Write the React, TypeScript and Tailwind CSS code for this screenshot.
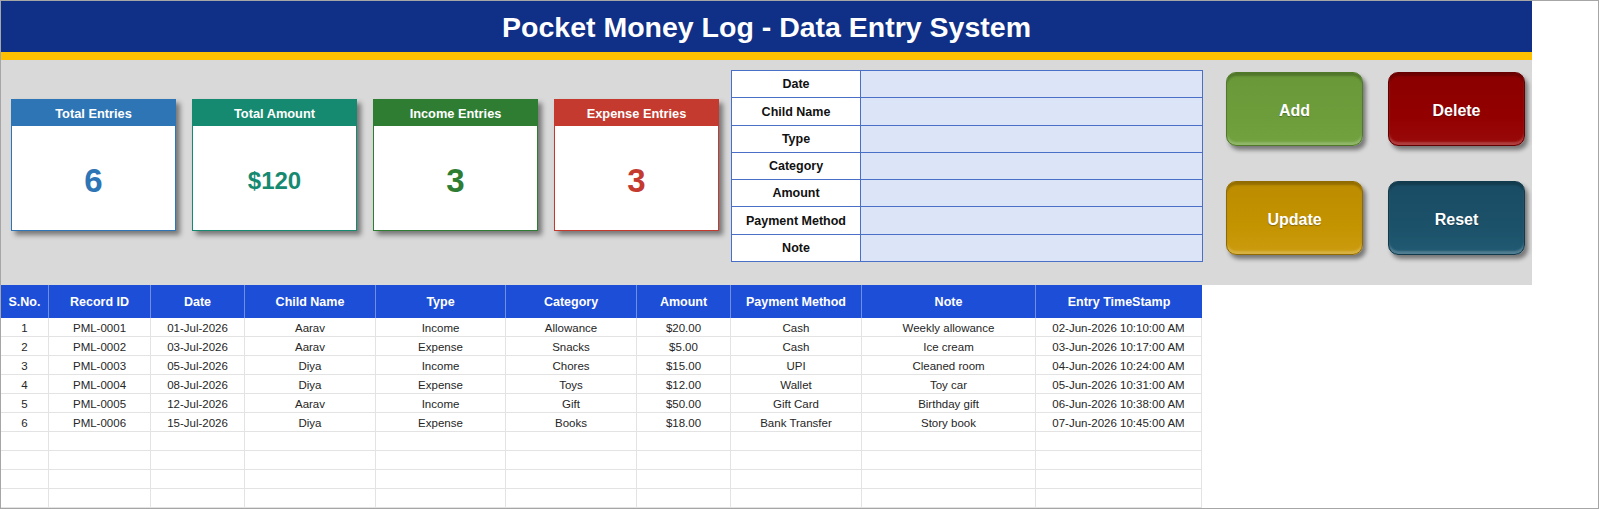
const cards = [
  {
    title: "Total Entries",
    value: "6",
    box: "border-[#2e75b6]",
    head: "bg-[#2e75b6]",
    text: "text-[#2e75b6] text-[33px]",
  },
  {
    title: "Total Amount",
    value: "$120",
    box: "border-[#168a70]",
    head: "bg-[#168a70]",
    text: "text-[#168a70] text-[24px]",
  },
  {
    title: "Income Entries",
    value: "3",
    box: "border-[#2e7d32]",
    head: "bg-[#2e7d32]",
    text: "text-[#2e7d32] text-[33px]",
  },
  {
    title: "Expense Entries",
    value: "3",
    box: "border-[#c43a2e]",
    head: "bg-[#c43a2e]",
    text: "text-[#c43a2e] text-[33px]",
  },
];

const formFields = ["Date", "Child Name", "Type", "Category", "Amount", "Payment Method", "Note"];

const buttons = [
  {
    label: "Add",
    cls: "bg-[linear-gradient(180deg,#689838_0%,#6d9d3b_60%,#72a240_100%)] border-[#4f7a28]",
  },
  {
    label: "Delete",
    cls: "bg-[linear-gradient(180deg,#8a0000_0%,#930000_60%,#9a0a0a_100%)] border-[#650000]",
  },
  {
    label: "Update",
    cls: "bg-[linear-gradient(180deg,#bd8c00_0%,#c49300_60%,#cc9c10_100%)] border-[#8f6a00]",
  },
  {
    label: "Reset",
    cls: "bg-[linear-gradient(180deg,#194c64_0%,#1b5169_60%,#215a73_100%)] border-[#123a4d]",
  },
];

const columns = [
  "S.No.",
  "Record ID",
  "Date",
  "Child Name",
  "Type",
  "Category",
  "Amount",
  "Payment Method",
  "Note",
  "Entry TimeStamp",
];

const rows = [
  ["1", "PML-0001", "01-Jul-2026", "Aarav", "Income", "Allowance", "$20.00", "Cash", "Weekly allowance", "02-Jun-2026 10:10:00 AM"],
  ["2", "PML-0002", "03-Jul-2026", "Aarav", "Expense", "Snacks", "$5.00", "Cash", "Ice cream", "03-Jun-2026 10:17:00 AM"],
  ["3", "PML-0003", "05-Jul-2026", "Diya", "Income", "Chores", "$15.00", "UPI", "Cleaned room", "04-Jun-2026 10:24:00 AM"],
  ["4", "PML-0004", "08-Jul-2026", "Diya", "Expense", "Toys", "$12.00", "Wallet", "Toy car", "05-Jun-2026 10:31:00 AM"],
  ["5", "PML-0005", "12-Jul-2026", "Aarav", "Income", "Gift", "$50.00", "Gift Card", "Birthday gift", "06-Jun-2026 10:38:00 AM"],
  ["6", "PML-0006", "15-Jul-2026", "Diya", "Expense", "Books", "$18.00", "Bank Transfer", "Story book", "07-Jun-2026 10:45:00 AM"],
  ["", "", "", "", "", "", "", "", "", ""],
  ["", "", "", "", "", "", "", "", "", ""],
  ["", "", "", "", "", "", "", "", "", ""],
  ["", "", "", "", "", "", "", "", "", ""],
];

const gridCols =
  "grid grid-cols-[48px_102px_94px_131px_130px_131px_94px_131px_174px_166px]";

export default function App() {
  return (
    <div className="h-[509px] w-[1600px] bg-white font-['Liberation_Sans',Arial,sans-serif]">
      <div className="h-[509px] w-[1599px] overflow-hidden border border-[#a6a6a6] bg-white">
        {/* title bar */}
        <div className="flex h-[51px] w-[1531px] items-center justify-center bg-[#102f87] pt-[2px]">
          <h1 className="text-[28.5px] font-bold text-white">Pocket Money Log - Data Entry System</h1>
        </div>
        <div className="h-[8px] w-[1531px] bg-[#ffc000]" />

        {/* dashboard panel */}
        <div className="flex h-[225px] w-[1531px] items-start bg-[#d9d9d9]">
          <div className="ml-[10px] mt-[39px] flex gap-[16px]">
            {cards.map((card) => (
              <div
                key={card.title}
                className={`flex h-[132px] w-[165px] flex-col border bg-white shadow-[4px_4px_5px_rgba(0,0,0,0.45)] ${card.box}`}
              >
                <div
                  className={`flex h-[26px] items-center justify-center pt-[2px] text-[12.8px] font-bold text-white ${card.head}`}
                >
                  {card.title}
                </div>
                <div className={`flex flex-1 items-center justify-center pt-[5px] font-bold ${card.text}`}>
                  {card.value}
                </div>
              </div>
            ))}
          </div>

          <div className="ml-[12px] mt-[10px] flex h-[192px] w-[472px] flex-col border border-[#4a6fc7] bg-white">
            {formFields.map((field, i) => (
              <div
                key={field}
                className={`grid flex-1 grid-cols-[129px_1fr] ${i > 0 ? "border-t border-[#4a6fc7]" : ""}`}
              >
                <div className="flex items-center justify-center border-r border-[#4a6fc7] pt-[1px] text-[12.5px] font-bold text-[#111]">
                  {field}
                </div>
                <div className="bg-[#dce5f8]" />
              </div>
            ))}
          </div>

          <div className="ml-[23px] mt-[12px] grid grid-cols-[137px_137px] grid-rows-[74px_74px] gap-x-[25px] gap-y-[35px]">
            {buttons.map((btn) => (
              <div
                key={btn.label}
                className={`flex items-center justify-center rounded-[10px] border pt-[4px] text-[16px] font-bold text-white shadow-[3px_4px_4px_rgba(0,0,0,0.45),inset_0_3px_2px_rgba(0,0,0,0.22),inset_0_-3px_2px_rgba(255,255,255,0.22)] [text-shadow:0_1px_1px_rgba(0,0,0,0.3)] ${btn.cls}`}
              >
                {btn.label}
              </div>
            ))}
          </div>
        </div>

        {/* records table */}
        <div className="w-[1201px]">
          <div className={`${gridCols} h-[33px] bg-[#1d4ed8]`}>
            {columns.map((col, i) => (
              <div
                key={col}
                className={`flex items-center justify-center pt-[2px] text-[12.5px] font-bold text-white ${
                  i < columns.length - 1 ? "border-r border-[#6f8fe4]" : ""
                }`}
              >
                {col}
              </div>
            ))}
          </div>
          {rows.map((row, r) => (
            <div key={r} className={`${gridCols} h-[19px] border-b border-[#e3e3e3]`}>
              {row.map((cell, c) => (
                <div
                  key={c}
                  className="flex items-center justify-center border-r border-[#e3e3e3] pt-[2px] text-[11.5px] text-[#262626]"
                >
                  {cell}
                </div>
              ))}
            </div>
          ))}
        </div>
      </div>
    </div>
  );
}
